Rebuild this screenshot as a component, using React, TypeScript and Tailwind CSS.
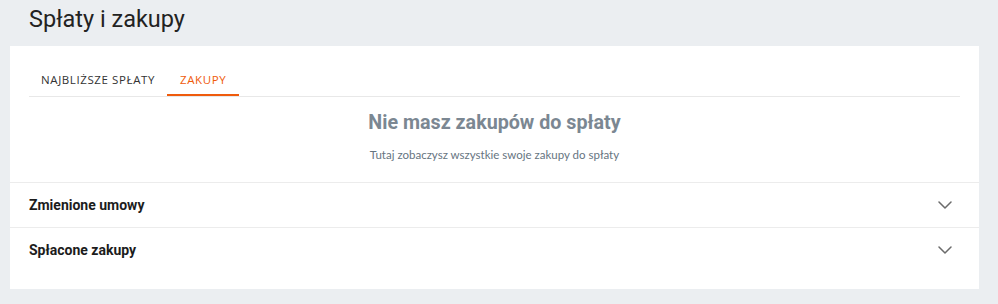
import React, { useState } from 'react';

const Chevron: React.FC = () => (
  <svg width="14" height="8" viewBox="0 0 14 8" fill="none" className="text-[#6b6b6b]">
    <path d="M1 1l6 6 6-6" stroke="currentColor" strokeWidth="1.5" strokeLinecap="round" strokeLinejoin="round" />
  </svg>
);

const tabs = ['NAJBLIŻSZE SPŁATY', 'ZAKUPY'];

const App: React.FC = () => {
  const [active, setActive] = useState(1);

  return (
    <div className="min-h-[304px] bg-[#ebeef1] pb-[15px] font-['Roboto',sans-serif]">
      <h1 className="px-[29px] pt-[4px] h-[46px] text-[23.5px] leading-[30px] text-[#222]">Spłaty i zakupy</h1>

      <div className="ml-[10px] mr-[19px] bg-white">
        <div className="px-[19px] pt-[20px]">
          <div className="flex border-b border-[#e8e8e8]">
            {tabs.map((t, i) => (
              <button
                key={t}
                onClick={() => setActive(i)}
                className={`h-[30px] px-[12px] font-['Open_Sans',sans-serif] text-[11.5px] tracking-[0.6px] border-b-2 ${
                  i === active ? 'text-[#ef5b0c] border-[#ef5b0c] px-[13px]' : 'text-[#333] border-transparent'
                }`}
              >
                {t}
              </button>
            ))}
          </div>
        </div>

        <div className="flex flex-col items-center pt-[13px] pb-[19px]">
          <p className="text-[19.7px] leading-[26px] font-bold text-[#7b8792]">Nie masz zakupów do spłaty</p>
          <p className="mt-[10px] font-['Lato',sans-serif] text-[11.5px] leading-[17px] text-[#66747f]">
            Tutaj zobaczysz wszystkie swoje zakupy do spłaty
          </p>
        </div>

        <div className="border-t border-[#ececec]">
          <div className="flex h-[44px] items-center justify-between pl-[19px] pr-[27px]">
            <span className="text-[14px] font-bold text-[#1c1c1c]">Zmienione umowy</span>
            <Chevron />
          </div>
        </div>
        <div className="border-t border-[#ececec] pb-[17px]">
          <div className="flex h-[44px] items-center justify-between pl-[19px] pr-[27px]">
            <span className="text-[14px] font-bold text-[#1c1c1c]">Spłacone zakupy</span>
            <Chevron />
          </div>
        </div>
      </div>
    </div>
  );
};

export default App;
